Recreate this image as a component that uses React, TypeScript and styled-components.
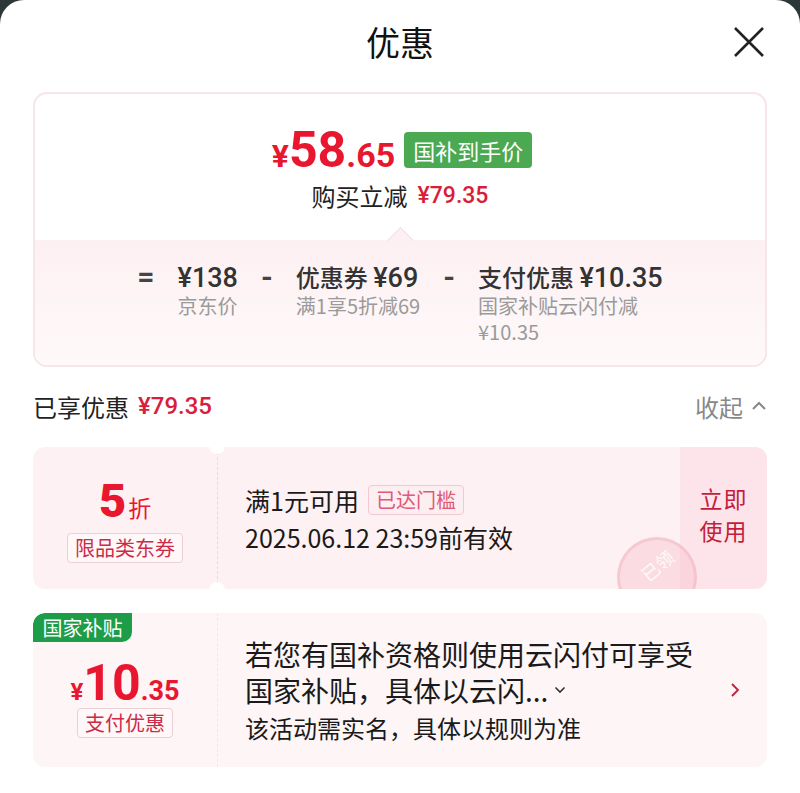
import React from 'react';
import styled, { createGlobalStyle } from 'styled-components';

const Global = createGlobalStyle`
  html, body { margin: 0; padding: 0; background: #2c3837; }
  body { font-family: "Noto Sans CJK SC", "Noto Sans", sans-serif; }
  * { box-sizing: border-box; }
`;

const NUM = `Roboto, "Noto Sans CJK SC", sans-serif`;

const Sheet = styled.div`
  width: 800px;
  height: 793px;
  background: #fff;
  border-radius: 24px 24px 0 0;
  overflow: hidden;
  padding: 0 33px;
  display: flex;
  flex-direction: column;
`;

const Header = styled.header`
  height: 84px;
  display: grid;
  grid-template-columns: 1fr auto 1fr;
  align-items: center;
`;

const Title = styled.h1`
  grid-column: 2;
  margin: 0;
  font-size: 34px;
  font-weight: 400;
  color: #111;
  line-height: 40px;
`;

const Close = styled.button`
  grid-column: 3;
  justify-self: end;
  margin-right: 2px;
  width: 32px;
  height: 32px;
  padding: 0;
  border: 0;
  background: none;
  display: flex;
`;

const Summary = styled.section`
  margin-top: 8px;
  border: 2px solid #f8e5e8;
  border-radius: 14px;
  overflow: hidden;
`;

const SummaryTop = styled.div`
  height: 146px;
  padding-top: 31px;
  display: flex;
  flex-direction: column;
  align-items: center;
`;

const PriceRow = styled.div`
  height: 50px;
  display: flex;
  align-items: center;
  gap: 9px;
  margin-left: 4px;
`;

const BigPrice = styled.div`
  display: flex;
  align-items: baseline;
  color: #e8162f;
  font-family: ${NUM};
  font-weight: 700;
  line-height: 1;
`;

const Part = styled.span<{ $size: number }>`
  font-size: ${(p) => p.$size}px;
`;

const GreenBadge = styled.span`
  height: 36px;
  line-height: 36px;
  padding: 0 9px;
  border-radius: 4px;
  background: #4ba951;
  color: #fff;
  font-size: 22px;
`;

const SubLine = styled.div`
  margin-top: 6px;
  font-size: 24px;
  line-height: 30px;
  color: #222;
  display: flex;
  align-items: center;
  gap: 10px;
`;

const RedAmount = styled.span<{ $size?: number }>`
  font-family: ${NUM};
  font-weight: 500;
  font-size: ${(p) => p.$size ?? 23}px;
  color: #d81e3a;
`;

const SummaryBottom = styled.div`
  position: relative;
  background: linear-gradient(180deg, #fdf0f2 0%, #fef9fa 100%);
  padding: 22px 0 20px;
  display: flex;
  justify-content: center;
  gap: 23px;
  &::before {
    content: '';
    position: absolute;
    top: -9px;
    left: 50%;
    width: 18px;
    height: 18px;
    margin-left: -9px;
    background: #fdf0f2;
    border-left: 1px solid #f1e1e3;
    border-top: 1px solid #f1e1e3;
    transform: rotate(45deg);
  }
`;

const Op = styled.span`
  font-family: ${NUM};
  font-weight: 700;
  font-size: 30px;
  line-height: 30px;
  color: #444;
`;

const Col = styled.div`
  display: flex;
  flex-direction: column;
`;

const ColMain = styled.div`
  font-size: 24px;
  line-height: 30px;
  color: #333;
  font-weight: 500;
  white-space: nowrap;
`;

const Num = styled.span`
  font-family: ${NUM};
  font-weight: 500;
  font-size: 27px;
`;

const ColSub = styled.div`
  font-size: 20px;
  line-height: 26px;
  color: #9a9a9a;
  white-space: nowrap;
`;

const SavedRow = styled.div`
  margin: 19px 0 21px;
  height: 40px;
  display: flex;
  justify-content: space-between;
  align-items: center;
`;

const SavedLabel = styled.div`
  font-size: 24px;
  color: #222;
  display: flex;
  align-items: center;
  gap: 9px;
`;

const Collapse = styled.div`
  font-size: 24px;
  color: #888;
  display: flex;
  align-items: center;
  gap: 8px;
`;

const Coupon = styled.div<{ $h: number; $bg: string }>`
  position: relative;
  height: ${(p) => p.$h}px;
  background: ${(p) => p.$bg};
  border-radius: 12px;
  display: flex;
  overflow: hidden;
`;

const CouponLeft = styled.div<{ $notch?: boolean; $top?: number }>`
  position: relative;
  width: 185px;
  flex-shrink: 0;
  border-right: 1px dashed ${(p) => (p.$notch ? '#f0d6db' : '#f5e6e9')};
  display: flex;
  flex-direction: column;
  align-items: center;
  justify-content: ${(p) => (p.$top ? 'flex-start' : 'center')};
  padding-top: ${(p) => p.$top ?? 0}px;
  ${(p) =>
    p.$notch
      ? `
  &::before, &::after {
    content: '';
    position: absolute;
    right: -8px;
    width: 16px;
    height: 16px;
    border-radius: 50%;
    background: #fff;
  }
  &::before { top: -9px; }
  &::after { bottom: -9px; }
  `
      : ''}
`;

const Discount = styled.div`
  display: flex;
  align-items: baseline;
  color: #e8162f;
  line-height: 1;
  height: 42px;
  margin-top: 4px;
`;

const DiscountNum = styled.span`
  font-family: ${NUM};
  font-weight: 900;
  font-size: 47px;
`;

const DiscountUnit = styled.span`
  font-size: 23px;
  margin-left: 2px;
`;

const OutlineTag = styled.span<{ $color: string; $border: string; $bg: string }>`
  display: inline-block;
  height: 30px;
  line-height: 28px;
  padding: 0 7px;
  border: 1px solid ${(p) => p.$border};
  border-radius: 4px;
  background: ${(p) => p.$bg};
  color: ${(p) => p.$color};
  font-size: 20px;
`;

const LeftTag = styled(OutlineTag)`
  margin-top: 14px;
`;

const CouponMid = styled.div`
  flex: 1;
  padding-left: 27px;
  display: flex;
  flex-direction: column;
  justify-content: center;
  color: #1a1a1a;
`;

const MidLine = styled.div`
  display: flex;
  align-items: center;
  gap: 9px;
  font-size: 25px;
  height: 37px;
`;

const UseNow = styled.div`
  width: 87px;
  flex-shrink: 0;
  background: #fce4ea;
  display: flex;
  flex-direction: column;
  align-items: center;
  justify-content: center;
  font-size: 23px;
  line-height: 32px;
  color: #c41d3b;
  padding-bottom: 8px;
  letter-spacing: 1px;
`;

const Stamp = styled.div`
  position: absolute;
  left: 584px;
  top: 90px;
  width: 80px;
  height: 80px;
  border-radius: 50%;
  border: 3px solid rgba(240, 175, 188, 0.45);
  background: rgba(249, 196, 206, 0.45);
  display: flex;
  align-items: flex-start;
  justify-content: center;
  padding-top: 12px;
  color: rgba(255, 255, 255, 0.85);
  font-size: 18px;
  & > span {
    transform: rotate(-40deg);
  }
`;

const GreenCorner = styled.div`
  position: absolute;
  top: 0;
  left: 0;
  width: 99px;
  height: 29px;
  line-height: 29px;
  background: #1e9d49;
  color: #fff;
  font-size: 20px;
  text-align: center;
  border-radius: 12px 0 10px 0;
`;

const PayPrice = styled.div`
  display: flex;
  align-items: baseline;
  color: #e8162f;
  font-family: ${NUM};
  font-weight: 700;
  line-height: 50px;
  height: 50px;
`;

const PayTag = styled(OutlineTag)`
  margin-top: 0;
`;

const PayText = styled.div`
  flex: 1;
  padding: 23px 0 0 27px;
  color: #1a1a1a;
  white-space: nowrap;
`;

const PayLine = styled.div<{ $size: number }>`
  font-size: ${(p) => p.$size}px;
  line-height: 36px;
  display: flex;
  align-items: center;
  gap: 6px;
`;

const PayLast = styled(PayLine)`
  margin-top: 2px;
`;

const Arrow = styled.div`
  width: 60px;
  flex-shrink: 0;
  display: flex;
  align-items: center;
  justify-content: center;
  padding-right: 4px;
`;

const CardGap = styled.div`
  height: 24px;
  flex-shrink: 0;
`;

export default function App() {
  return (
    <>
      <Global />
      <Sheet>
        <Header>
          <Title>优惠</Title>
          <Close aria-label="关闭">
            <svg width="32" height="32" viewBox="0 0 32 32">
              <path d="M2 2 L30 30 M30 2 L2 30" stroke="#222" strokeWidth="2.6" fill="none" />
            </svg>
          </Close>
        </Header>

        <Summary>
          <SummaryTop>
            <PriceRow>
              <BigPrice>
                <Part $size={32}>¥</Part>
                <Part $size={50}>58</Part>
                <Part $size={34}>.65</Part>
              </BigPrice>
              <GreenBadge>国补到手价</GreenBadge>
            </PriceRow>
            <SubLine>
              购买立减
              <RedAmount>¥79.35</RedAmount>
            </SubLine>
          </SummaryTop>
          <SummaryBottom>
            <Op>=</Op>
            <Col>
              <ColMain>
                <Num>¥138</Num>
              </ColMain>
              <ColSub>京东价</ColSub>
            </Col>
            <Op>-</Op>
            <Col>
              <ColMain>
                优惠券 <Num>¥69</Num>
              </ColMain>
              <ColSub>满1享5折减69</ColSub>
            </Col>
            <Op>-</Op>
            <Col>
              <ColMain>
                支付优惠 <Num>¥10.35</Num>
              </ColMain>
              <ColSub>国家补贴云闪付减</ColSub>
              <ColSub>¥10.35</ColSub>
            </Col>
          </SummaryBottom>
        </Summary>

        <SavedRow>
          <SavedLabel>
            已享优惠
            <RedAmount $size={24}>¥79.35</RedAmount>
          </SavedLabel>
          <Collapse>
            收起
            <svg width="16" height="10" viewBox="0 0 16 10">
              <path d="M2 8 L8 2 L14 8" stroke="#888" strokeWidth="2" fill="none" />
            </svg>
          </Collapse>
        </SavedRow>

        <Coupon $h={142} $bg="#fdf1f3">
          <CouponLeft $notch>
            <Discount>
              <DiscountNum>5</DiscountNum>
              <DiscountUnit>折</DiscountUnit>
            </Discount>
            <LeftTag $color="#cc2b48" $border="#ead0d5" $bg="#fff7f8">
              限品类东券
            </LeftTag>
          </CouponLeft>
          <CouponMid>
            <MidLine>
              满1元可用
              <OutlineTag $color="#de5a76" $border="#f2c9d1" $bg="#fdeef1">
                已达门槛
              </OutlineTag>
            </MidLine>
            <MidLine>2025.06.12 23:59前有效</MidLine>
          </CouponMid>
          <UseNow>
            <span>立即</span>
            <span>使用</span>
          </UseNow>
          <Stamp>
            <span>已领</span>
          </Stamp>
        </Coupon>

        <CardGap />

        <Coupon $h={154} $bg="#fdf5f6">
          <GreenCorner>国家补贴</GreenCorner>
          <CouponLeft $top={45}>
            <PayPrice>
              <Part $size={24}>¥</Part>
              <Part $size={50}>10</Part>
              <Part $size={27}>.35</Part>
            </PayPrice>
            <PayTag $color="#cc2b48" $border="#ead0d5" $bg="#fff7f8">
              支付优惠
            </PayTag>
          </CouponLeft>
          <PayText>
            <PayLine $size={28}>若您有国补资格则使用云闪付可享受</PayLine>
            <PayLine $size={28}>
              国家补贴，具体以云闪...
              <svg width="12" height="8" viewBox="0 0 12 8">
                <path d="M1.5 1.5 L6 6 L10.5 1.5" stroke="#333" strokeWidth="1.6" fill="none" />
              </svg>
            </PayLine>
            <PayLast $size={24}>该活动需实名，具体以规则为准</PayLast>
          </PayText>
          <Arrow>
            <svg width="10" height="16" viewBox="0 0 10 16">
              <path d="M2 2 L8 8 L2 14" stroke="#c41d3b" strokeWidth="1.8" fill="none" />
            </svg>
          </Arrow>
        </Coupon>
      </Sheet>
    </>
  );
}
